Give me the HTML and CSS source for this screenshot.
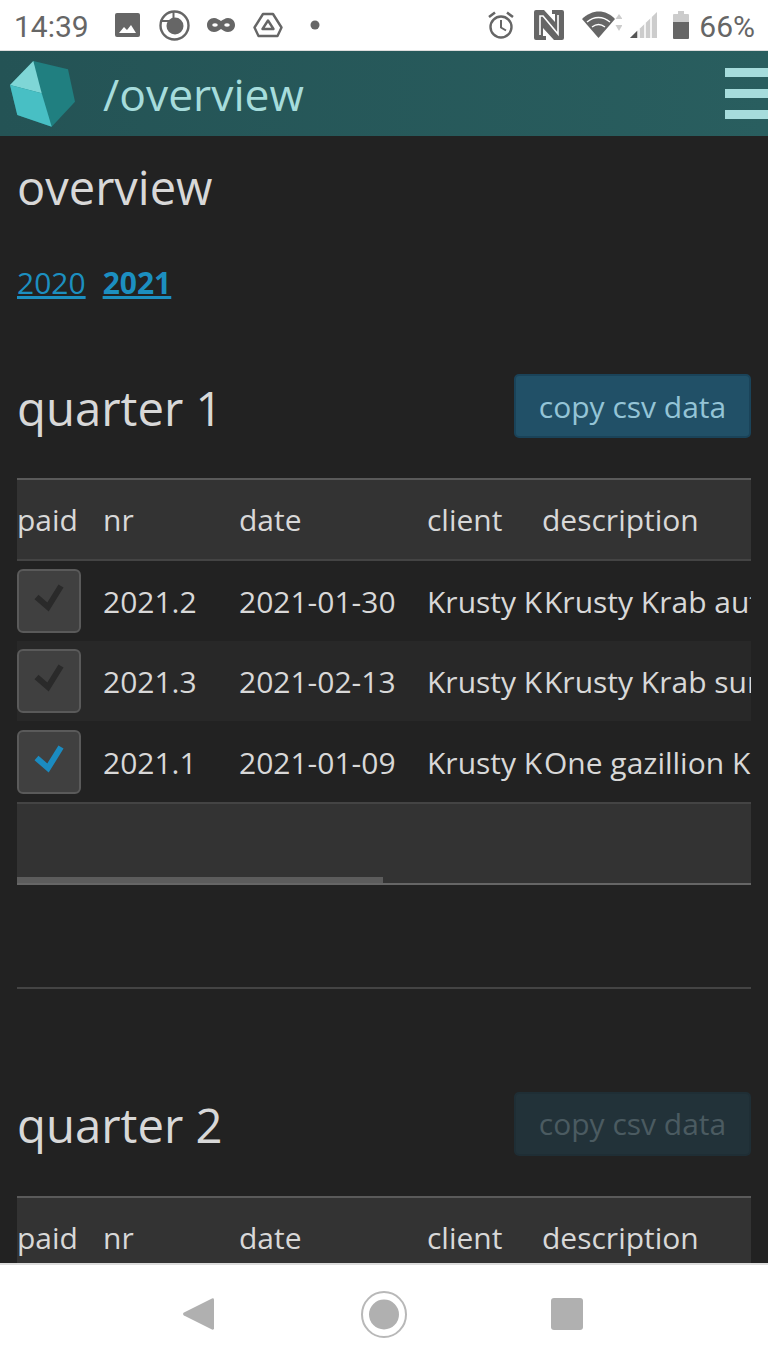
FILE: index.html
```html
<!DOCTYPE html>
<html lang="en">
<head>
<meta charset="utf-8">
<title>overview</title>
<link rel="stylesheet" href="styles.css">
</head>
<body>
<div class="statusbar">
  <div class="status-left">
    <span class="time">14:39</span>
    <svg class="i-pic" viewBox="0 0 25 24"><rect width="25" height="24" rx="2" fill="#666"/><path d="M4 20l5-6 3 3 4-5 5 8z" fill="#fff"/></svg>
    <svg class="i-ring" viewBox="0 0 31 31"><circle cx="15.5" cy="15.5" r="14" fill="none" stroke="#666" stroke-width="2.4"/><circle cx="16" cy="16" r="8.5" fill="#666"/><path d="M14.5 2v9M2 11h9" stroke="#666" stroke-width="2"/></svg>
    <svg class="i-mask" viewBox="0 0 28 16"><path d="M7 1c3 0 5 2 7 3 2-1 4-3 7-3 4 0 7 3 7 7s-3 7-7 7c-3 0-5-2-7-3-2 1-4 3-7 3-4 0-7-3-7-7s3-7 7-7z" fill="#666"/><ellipse cx="8" cy="8" rx="2.800" ry="1.800" fill="#fff"/><ellipse cx="20" cy="8" rx="2.800" ry="1.800" fill="#fff"/></svg>
    <svg class="i-drive" viewBox="0 0 30 26"><path d="M10 2h10l8.500 13.500-4 8.500h-19l-4-8.500z" fill="none" stroke="#666" stroke-width="2.400" stroke-linejoin="round"/><path d="M15 8.500l5.500 8.500h-11z" fill="none" stroke="#666" stroke-width="2.400" stroke-linejoin="round"/></svg>
    <svg class="i-dot" viewBox="0 0 10 10"><circle cx="5" cy="5" r="4.500" fill="#666"/></svg>
  </div>
  <div class="status-right">
    <svg class="i-alarm" viewBox="0 0 28 28"><circle cx="14" cy="16" r="10.500" fill="none" stroke="#666" stroke-width="2.400"/><path d="M14 9v7.500l5 3" fill="none" stroke="#666" stroke-width="2"/><path d="M2 6l6-4.500M26 6l-6-4.500" stroke="#666" stroke-width="2.600"/></svg>
    <svg class="i-nfc" viewBox="0 0 30 30"><path d="M2 0h8l11 12V4h-3V0h10a2 2 0 012 2v26a2 2 0 01-2 2h-8L9 18v8h3v4H2a2 2 0 01-2-2V2a2 2 0 012-2z" fill="#666"/><path d="M6 25V6h3l15 18V5" fill="none" stroke="#fff" stroke-width="1.600"/></svg>
    <svg class="i-wifi" viewBox="0 0 40 28"><path d="M0 8c10-10 24-10 33 0L16.500 27z" fill="#666"/><path d="M5 11c7-6 16-6 23 0M10 16c4-3 9-3 13 0" fill="none" stroke="#fff" stroke-width="1.400"/><path d="M37 3l3.500 5h-7z" fill="#ccc"/><path d="M37 20l3.500-6h-7z" fill="#ccc"/></svg>
    <svg class="i-signal" viewBox="0 0 27 26"><path d="M27 0v26H0z" fill="#ccc"/><path d="M0 26l7-7v7z" fill="#555"/><path d="M9 17v9M15 11v15M21 5v21" stroke="#fff" stroke-width="1.500"/></svg>
    <svg class="i-batt" viewBox="0 0 16 28"><path d="M5 0h6v3h4a1 1 0 011 1v10H0V4a1 1 0 011-1h4z" fill="#ccc"/><path d="M0 11h16v16a1 1 0 01-1 1H1a1 1 0 01-1-1z" fill="#666"/></svg>
    <span class="pct">66%</span>
  </div>
</div>

<header class="appbar">
  <svg class="logo" viewBox="0 0 66 67"><path d="M23.300 0L58 8.300l7 32.400L41.700 65.700 7.300 54 0 24z" fill="#207f80"/><path d="M23.300 0L0 24l31.700 8.300z" fill="#7fd6d6"/><path d="M0 24l7.300 30 34.400 11.700-10-33.400z" fill="#48bfc4"/></svg>
  <span class="appbar-title">/overview</span>
  <div class="burger"><span></span><span></span><span></span></div>
</header>

<main class="content">
  <h1 class="page-title">overview</h1>
  <nav class="years"><a href="#" class="year">2020</a><a href="#" class="year year-on">2021</a></nav>

  <section class="quarter">
    <div class="quarter-head">
      <h2 class="quarter-title">quarter 1</h2>
      <button class="btn">copy csv data</button>
    </div>
    <div class="table-box">
      <div class="table-scroll">
        <table class="inv">
          <colgroup><col class="c1"><col class="c2"><col class="c3"><col class="c4"><col class="c5"></colgroup>
          <thead><tr><th>paid</th><th>nr</th><th>date</th><th>client</th><th>description</th></tr></thead>
          <tbody>
            <tr><td class="td-check"><span class="cb"><svg viewBox="0 0 60 60"><path d="M17.500 26L29 36l13-21" fill="none" stroke="#2a2a2a" stroke-width="6"/></svg></span></td><td>2021.2</td><td>2021-01-30</td><td>Krusty Krab</td><td class="td-desc">Krusty Krab autumn campaign</td></tr>
            <tr class="alt"><td class="td-check"><span class="cb"><svg viewBox="0 0 60 60"><path d="M17.500 26L29 36l13-21" fill="none" stroke="#2a2a2a" stroke-width="6"/></svg></span></td><td>2021.3</td><td>2021-02-13</td><td>Krusty Krab</td><td class="td-desc">Krusty Krab summer campaign</td></tr>
            <tr><td class="td-check"><span class="cb"><svg viewBox="0 0 60 60"><path d="M17.500 26L29 36l13-21" fill="none" stroke="#1b8bc0" stroke-width="6"/></svg></span></td><td>2021.1</td><td>2021-01-09</td><td>Krusty Krab</td><td class="td-desc">One gazillion Krabby Patties</td></tr>
          </tbody>
        </table>
      </div>
      <div class="table-foot"><div class="thumb"></div></div>
    </div>
    <hr class="rule">
  </section>

  <section class="quarter">
    <div class="quarter-head">
      <h2 class="quarter-title">quarter 2</h2>
      <button class="btn btn-off" disabled>copy csv data</button>
    </div>
    <div class="table-box">
      <div class="table-scroll">
        <table class="inv">
          <colgroup><col class="c1"><col class="c2"><col class="c3"><col class="c4"><col class="c5"></colgroup>
          <thead><tr><th>paid</th><th>nr</th><th>date</th><th>client</th><th>description</th></tr></thead>
        </table>
      </div>
    </div>
  </section>
</main>

<footer class="navbar">
  <svg class="n-back" viewBox="0 0 31 34"><path d="M29 1.500a1.500 1.500 0 012 1.300v28.400a1.500 1.500 0 01-2 1.300L1 18.500a1.700 1.700 0 010-3z" fill="#b0b0b0"/></svg>
  <svg class="n-home" viewBox="0 0 46 47"><ellipse cx="23" cy="23.500" rx="22" ry="22.500" fill="none" stroke="#b8b8b8" stroke-width="2"/><ellipse cx="23" cy="23.500" rx="15" ry="15" fill="#b0b0b0"/></svg>
  <div class="n-square"></div>
</footer>
</body>
</html>
```
FILE: styles.css
```css
* { box-sizing: border-box; }
html, body { margin: 0; height: 100%; }
body {
  height: 1365px;
  display: flex;
  flex-direction: column;
  overflow: hidden;
  background: #222;
  color: #d8d8d8;
  font-family: "Open Sans", "Noto Sans", sans-serif;
}

/* status bar */
.statusbar {
  flex: none;
  height: 51px;
  padding: 0 13px 0 14px;
  display: flex;
  justify-content: space-between;
  align-items: center;
  background: #fff;
  border-bottom: 1px solid #ddd;
  color: #666;
  font-family: Roboto, sans-serif;
  font-size: 30px;
}
.status-left, .status-right { display: flex; align-items: center; }
.time { width: 74px; padding-top: 2px; }
.i-pic { width: 25px; height: 24px; margin-left: 27px; }
.i-ring { width: 31px; height: 31px; margin-left: 19px; }
.i-mask { width: 28px; height: 16px; margin-left: 17px; }
.i-drive { width: 30px; height: 26px; margin-left: 18px; }
.i-dot { width: 10px; height: 10px; margin-left: 27px; }
.i-alarm { width: 28px; height: 28px; }
.i-nfc { width: 30px; height: 30px; margin-left: 19px; }
.i-wifi { width: 40px; height: 28px; margin-left: 18px; }
.i-signal { width: 27px; height: 26px; margin-left: 8px; }
.i-batt { width: 16px; height: 28px; margin-left: 16px; }
.pct { margin-left: 10px; padding-top: 2px; }

/* app bar */
.appbar {
  flex: none;
  height: 85px;
  display: flex;
  align-items: center;
  padding-left: 10px;
  background: linear-gradient(90deg, #245355, #295e5f);
  color: #a6dcdc;
}
.logo { width: 66px; height: 67px; margin-top: 2px; }
.appbar-title { margin-left: 27px; font-size: 44.400px; }
.burger {
  margin-left: auto;
  width: 43px;
  display: flex;
  flex-direction: column;
  gap: 12px;
}
.burger span { height: 9px; background: #a6dcdc; }

/* content */
.content {
  flex: 1;
  min-height: 0;
  overflow: hidden;
  padding: 21px 17px 0;
}
.page-title {
  margin: 0;
  font-size: 47px;
  line-height: 60px;
  font-weight: 400;
}
.years {
  margin-top: 46px;
  display: flex;
  gap: 17px;
  font-size: 30px;
  line-height: 40px;
}
.year { color: #1c8fc0; font-weight: 400; text-decoration: underline; }
.year-on { font-weight: 700; }

.quarter-head {
  display: flex;
  justify-content: space-between;
  align-items: center;
  height: 64px;
}
.years + .quarter { margin-top: 71px; }
.quarter-title {
  margin: 0;
  padding-top: 2px;
  font-size: 47.300px;
  font-weight: 400;
}
.btn {
  width: 237px;
  height: 64px;
  padding: 0;
  background: #215067;
  border: 2px solid #1a4359;
  border-radius: 5px;
  color: #94c4d6;
  font: 400 30px "Open Sans", sans-serif;
}
.btn-off {
  background: #223239;
  border-color: #1f2e35;
  color: #4b5b61;
}

/* table */
.table-box {
  margin-top: 40px;
  border-top: 2px solid #5a5a5a;
  border-bottom: 2px solid #666;
  background: #333;
}
.table-scroll { overflow: hidden; }
.inv {
  width: 1472px;
  table-layout: fixed;
  border-collapse: collapse;
  font-size: 30px;
}
.c1 { width: 86px; }
.c2 { width: 136px; }
.c3 { width: 188px; }
.c4 { width: 115px; }
th {
  height: 80px;
  padding: 0;
  text-align: left;
  font-weight: 400;
  white-space: nowrap;
  border-bottom: 2px solid #444;
  background: #333;
}
td {
  height: 80.670px;
  padding: 2px 0 0;
  white-space: nowrap;
  overflow: hidden;
  background: #222;
}
td.td-check { padding: 0; }
td.td-desc { padding-left: 2px; }
.alt td { background: #282828; }
.cb {
  display: block;
  width: 64px;
  height: 64px;
  background: #404040;
  border: 2px solid #5a5a5a;
  border-radius: 6px;
}
.cb svg { display: block; width: 60px; height: 60px; }
.table-foot {
  height: 81px;
  display: flex;
  flex-direction: column;
  justify-content: flex-end;
  border-top: 2px solid #444;
}
.thumb { width: 366px; height: 6px; background: #5c5c5c; }

.rule {
  margin: 102px 0 103px;
  border: 0;
  border-top: 2px solid #444;
}

/* navigation bar */
.navbar {
  flex: none;
  height: 102px;
  position: relative;
  z-index: 1;
  display: flex;
  align-items: center;
  padding: 0 0 2px 183px;
  background: #fff;
  border-top: 2px solid #ddd;
}
.n-back { width: 31px; height: 34px; }
.n-home { width: 46px; height: 47px; margin-left: 147px; }
.n-square { width: 32px; height: 32px; margin-left: 144px; border-radius: 3px; background: #b0b0b0; }
```
